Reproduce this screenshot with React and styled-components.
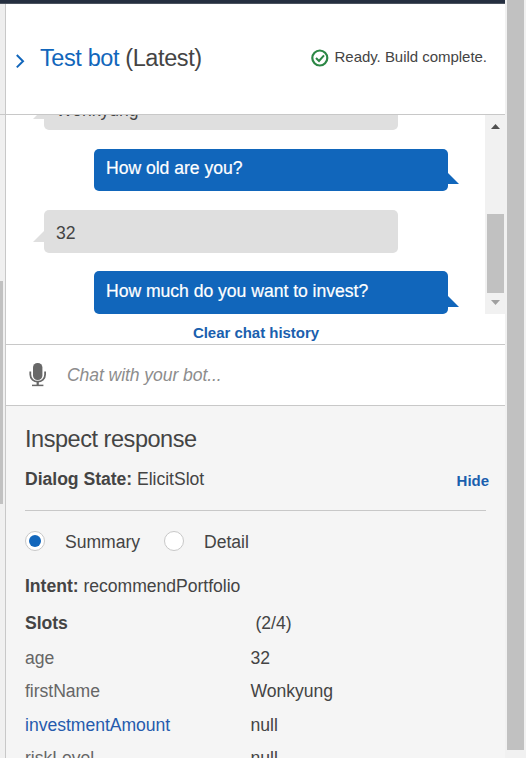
import React from "react";
import styled, { createGlobalStyle, css } from "styled-components";

const GlobalStyle = createGlobalStyle`
  * { box-sizing: border-box; }
  body {
    margin: 0;
    overflow: hidden;
    background: #fff;
    color: #444;
    font: 17.6px/20px "Liberation Sans", Arial, sans-serif;
    letter-spacing: -0.03px;
  }
`;

const Page = styled.div`
  display: flex;
  width: 526px;
  height: 758px;
  overflow: hidden;
`;

const Main = styled.div`
  display: flex;
  flex-direction: column;
  width: 505px;
`;

const TopBar = styled.div`
  height: 4px;
  flex: none;
  background: #252f40;
  border-bottom: 1px solid #4b535f;
`;

const Columns = styled.div`
  display: flex;
  flex: 1;
  min-height: 0;
`;

const Gutter = styled.div`
  width: 6px;
  flex: none;
  background: #f0f0f0;
  border-right: 1px solid #c8c8c8;
`;

const GutterHead = styled.div`
  height: 111px;
  margin-bottom: 166px;
  background: #eee;
  border-bottom: 1px solid #c8c8c8;
`;

const GutterThumb = styled.div`
  width: 3px;
  height: 223px;
  background: #c1c1c1;
`;

const Panel = styled.div`
  display: flex;
  flex-direction: column;
  width: 499px;
`;

const Header = styled.header`
  display: flex;
  align-items: flex-start;
  height: 111px;
  flex: none;
  padding: 42px 18px 0 9px;
  border-bottom: 1px solid #c8c8c8;
`;

const Chevron = styled.svg`
  width: 10px;
  height: 16px;
  margin: 7px 15px 0 0;
`;

const Title = styled.h1`
  margin: 0;
  font-size: 23.5px;
  line-height: 24px;
  font-weight: 400;
  letter-spacing: -0.4px;
  white-space: nowrap;
`;

const TitleLink = styled.span`
  color: #1166bb;
`;

const Status = styled.div`
  display: flex;
  margin: 2px 0 0 auto;
  font-size: 15px;
  line-height: 17px;
  white-space: nowrap;
`;

const StatusIcon = styled.svg`
  width: 18px;
  height: 18px;
  margin: 1px 6px 0 0;
`;

const ChatArea = styled.section`
  display: flex;
  height: 199px;
  flex: none;
`;

const Messages = styled.div`
  display: flex;
  flex: 1;
  flex-direction: column;
  justify-content: flex-end;
  overflow: hidden;
`;

const Bubble = styled.div`
  position: relative;
  width: 354px;
  height: ${(p) => p.$height}px;
  flex: none;
  margin-top: ${(p) => p.$gap}px;
  margin-left: ${(p) => (p.$bot ? 88 : 38)}px;
  padding: ${(p) => p.$pad}px 12px 0;
  border-radius: 5px;
  background: ${(p) => (p.$bot ? "#1166bb" : "#dfdfdf")};
  color: ${(p) => (p.$bot ? "#fff" : "#444")};
  ${(p) => p.$bot && css`-webkit-text-stroke: 0.2px #fff;`}

  &::after {
    content: "";
    position: absolute;
    width: 11px;
    height: 11px;
    background: inherit;
    ${(p) =>
      p.$bot
        ? css`
            left: 100%;
            bottom: 7px;
            clip-path: polygon(0 0, 100% 100%, 0 100%);
          `
        : css`
            right: 100%;
            bottom: 11px;
            clip-path: polygon(100% 0, 100% 100%, 0 100%);
          `}
  }
`;

const InnerScrollbar = styled.div`
  display: flex;
  flex-direction: column;
  width: 20px;
  padding: 9px 1px 9px 2px;
  background: #f1f1f1;
`;

const ScrollArrow = styled.svg`
  display: block;
  width: 9px;
  height: 5px;
  margin-left: 4px;
`;

const InnerThumb = styled.div`
  width: 17px;
  height: 79px;
  margin: auto 0 7px;
  background: #c1c1c1;
`;

const ClearRow = styled.div`
  display: flex;
  justify-content: center;
  height: 31px;
  flex: none;
  padding: 6px 0 0 1px;
  border-bottom: 1px solid #c8c8c8;
`;

const LinkButton = styled.button`
  border: 0;
  padding: 0;
  background: none;
  color: #1a5fae;
  font: bold 15px/17px "Liberation Sans", Arial, sans-serif;
  letter-spacing: -0.03px;
`;

const InputRow = styled.div`
  display: flex;
  align-items: flex-start;
  height: 61px;
  flex: none;
  padding: 18px 23px 0;
  border-bottom: 1px solid #c8c8c8;
`;

const Mic = styled.svg`
  width: 17px;
  height: 24px;
  margin-right: 21px;
`;

const Placeholder = styled.span`
  margin-top: 2px;
  color: #8d8d8d;
  font-style: italic;
  letter-spacing: -0.09px;
`;

const Inspector = styled.section`
  flex: 1;
  min-height: 0;
  overflow: hidden;
  padding: 21px 18px 0 19px;
  background: #f5f5f5;
`;

const SectionTitle = styled.h2`
  margin: 0 0 18px;
  font-size: 23.5px;
  line-height: 24px;
  font-weight: 400;
  letter-spacing: -0.46px;
`;

const StateRow = styled.div`
  display: flex;
  justify-content: space-between;
  height: 41px;
  margin-right: -2px;
`;

const HideButton = styled(LinkButton)`
  height: 17px;
  margin-top: 3px;
`;

const Divider = styled.div`
  width: 461px;
  height: 1px;
  background: #c8c8c8;
`;

const Options = styled.div`
  display: flex;
  height: 65px;
  padding-top: 20px;
`;

const Option = styled.label`
  display: flex;
  width: 139px;
  gap: 20px;
  line-height: 22px;
`;

const Radio = styled.span`
  display: flex;
  align-items: center;
  justify-content: center;
  width: 20px;
  height: 20px;
  border: 1px solid #c8c8c8;
  border-radius: 50%;
  background: #fff;

  &::after {
    content: "";
    width: 12px;
    height: 12px;
    border-radius: 50%;
    background: ${(p) => (p.$checked ? "#1166bb" : "transparent")};
  }
`;

const IntentLine = styled.div`
  height: 37px;
`;

const SlotRow = styled.div`
  display: grid;
  grid-template-columns: 225.5px 1fr;
  height: ${(p) => p.$height}px;
`;

const SlotName = styled.span`
  color: ${(p) => (p.$active ? "#265bad" : "#666")};
`;

const SlotCount = styled.span`
  padding-left: 5px;
`;

const PageScrollbar = styled.div`
  width: 21px;
  padding: 0 2px;
  background: #f1f1f1;
`;

const PageThumb = styled.div`
  width: 17px;
  height: 750px;
  background: #c1c1c1;
`;

const messages = [
  { text: "Wonkyung", height: 43, gap: 0, pad: 13 },
  { text: "How old are you?", bot: true, height: 42, gap: 19, pad: 9 },
  { text: "32", height: 43, gap: 19, pad: 13 },
  { text: "How much do you want to invest?", bot: true, height: 43, gap: 18, pad: 10 },
];

const slots = [
  { name: "age", value: "32", height: 33 },
  { name: "firstName", value: "Wonkyung", height: 34 },
  { name: "investmentAmount", value: "null", active: true, height: 33 },
  { name: "riskLevel", value: "null", height: 33 },
];

export default function App() {
  return (
    <>
      <GlobalStyle />
      <Page>
        <Main>
          <TopBar />
          <Columns>
            <Gutter>
              <GutterHead />
              <GutterThumb />
            </Gutter>
            <Panel>
              <Header>
                <Chevron viewBox="0 0 10 16" fill="none" stroke="#1166bb" strokeWidth="2">
                  <path d="M1.8 2 L8 8.2 L1.8 14.4" />
                </Chevron>
                <Title>
                  <TitleLink>Test bot</TitleLink> (Latest)
                </Title>
                <Status>
                  <StatusIcon viewBox="0 0 18 18" fill="none" stroke="#2c8745">
                    <circle cx="8.8" cy="9" r="7.5" strokeWidth="2.2" />
                    <path d="M5 9 L8 12 L13 6.4" strokeWidth="2" />
                  </StatusIcon>
                  Ready. Build complete.
                </Status>
              </Header>
              <ChatArea>
                <Messages>
                  {messages.map((m) => (
                    <Bubble key={m.text} $bot={m.bot} $height={m.height} $gap={m.gap} $pad={m.pad}>
                      {m.text}
                    </Bubble>
                  ))}
                </Messages>
                <InnerScrollbar>
                  <ScrollArrow viewBox="0 0 9 5" fill="#505050">
                    <path d="M0 5 L4.5 0 L9 5 Z" />
                  </ScrollArrow>
                  <InnerThumb />
                  <ScrollArrow viewBox="0 0 9 5" fill="#a0a0a0">
                    <path d="M0 0 L4.5 5 L9 0 Z" />
                  </ScrollArrow>
                </InnerScrollbar>
              </ChatArea>
              <ClearRow>
                <LinkButton>Clear chat history</LinkButton>
              </ClearRow>
              <InputRow>
                <Mic viewBox="0 0 17 24" fill="none" stroke="#686868">
                  <rect x="4" y="0" width="9.4" height="17" rx="4.5" fill="#686868" stroke="none" />
                  <path d="M1.3 8.5 V11.5 C1.3 21 16.1 21 16.1 11.5 V8.5" strokeWidth="1.8" />
                  <path d="M8.7 18.5 V22.3" strokeWidth="2.2" />
                  <path d="M3 22.4 H14.4" strokeWidth="1.5" />
                </Mic>
                <Placeholder>Chat with your bot...</Placeholder>
              </InputRow>
              <Inspector>
                <SectionTitle>Inspect response</SectionTitle>
                <StateRow>
                  <span>
                    <b>Dialog State:</b> ElicitSlot
                  </span>
                  <HideButton>Hide</HideButton>
                </StateRow>
                <Divider />
                <Options>
                  <Option>
                    <Radio $checked />
                    Summary
                  </Option>
                  <Option>
                    <Radio />
                    Detail
                  </Option>
                </Options>
                <IntentLine>
                  <b>Intent:</b> recommendPortfolio
                </IntentLine>
                <SlotRow $height={35}>
                  <b>Slots</b>
                  <SlotCount>(2/4)</SlotCount>
                </SlotRow>
                {slots.map((s) => (
                  <SlotRow key={s.name} $height={s.height}>
                    <SlotName $active={s.active}>{s.name}</SlotName>
                    <span>{s.value}</span>
                  </SlotRow>
                ))}
              </Inspector>
            </Panel>
          </Columns>
        </Main>
        <PageScrollbar>
          <PageThumb />
        </PageScrollbar>
      </Page>
    </>
  );
}
